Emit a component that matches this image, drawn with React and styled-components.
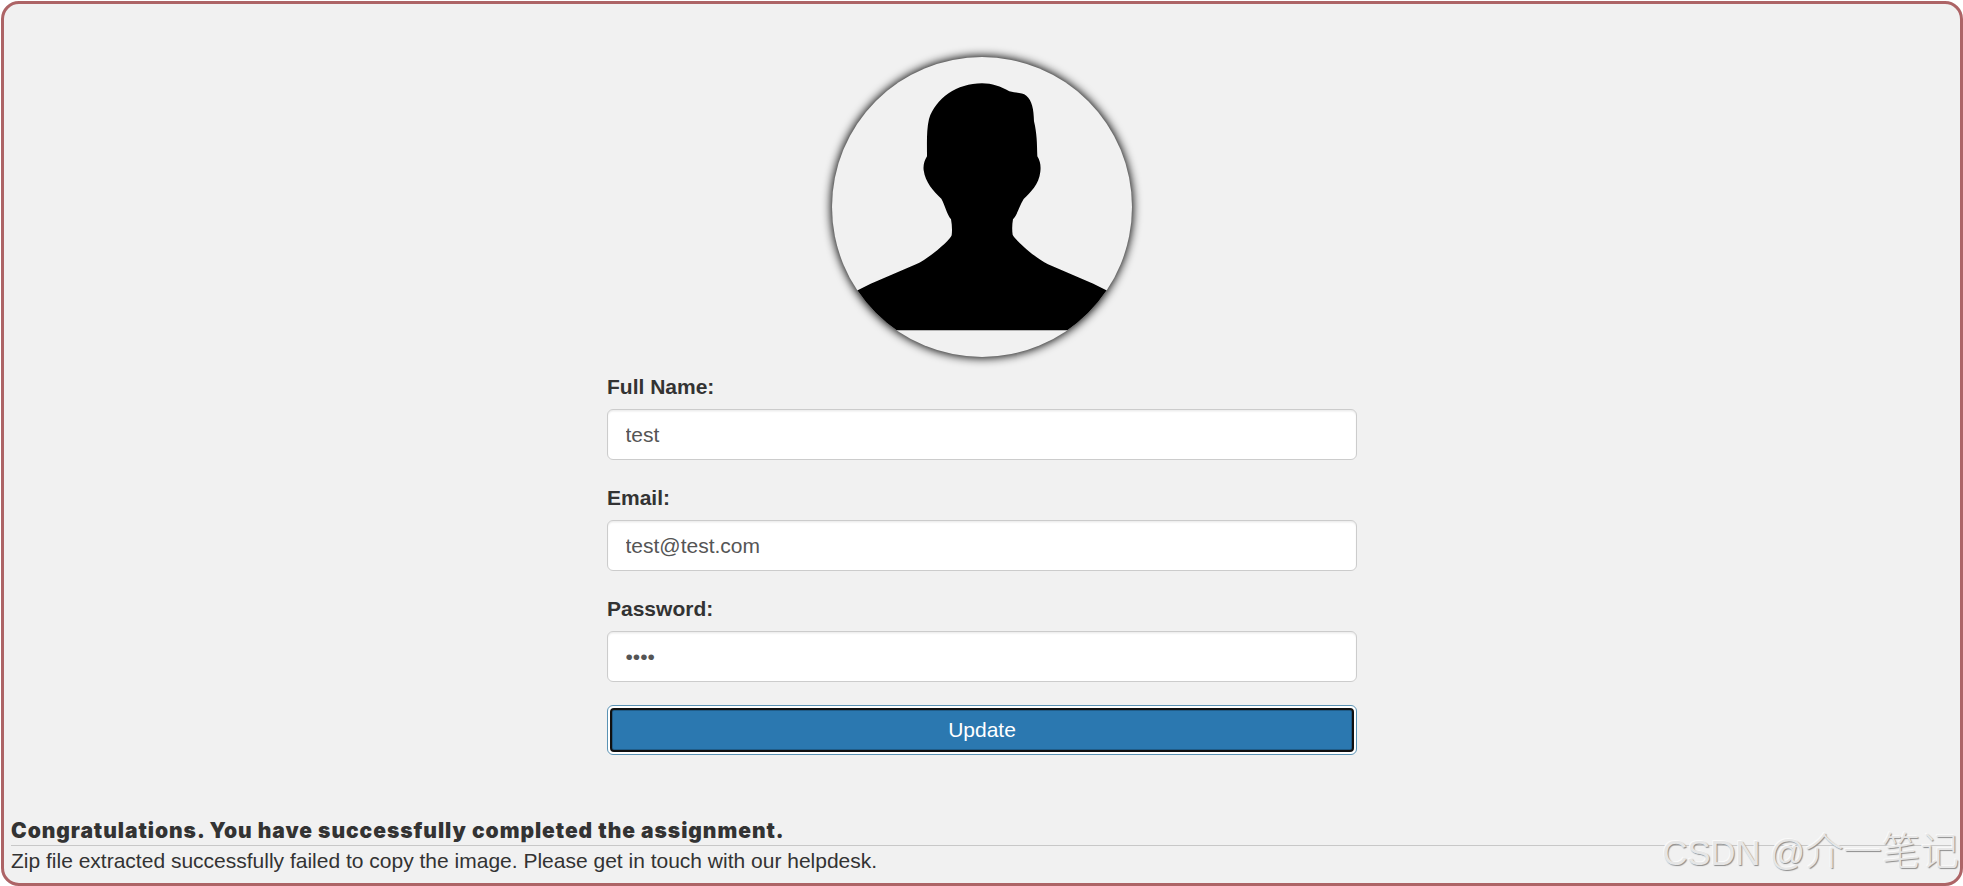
import { useState } from "react";
import styled, { createGlobalStyle } from "styled-components";

const GlobalStyle = createGlobalStyle`
  *, *::before, *::after {
    box-sizing: border-box;
  }
  html, body {
    margin: 0;
    background: #fff;
    overflow: hidden;
  }
  body {
    font-family: "Liberation Sans", Arial, "Noto Sans CJK SC", sans-serif;
    font-size: 21px;
    line-height: 30px;
    color: #333;
  }
`;
const Page = styled.main`
  position: relative;
  display: flex;
  flex-direction: column;
  height: 885px;
  margin: 1px 0 0 1px;
  padding: 53px 7px 0;
  border: 3px solid #ad6466;
  border-radius: 18px;
  background: #f1f1f1;
`;
const Profile = styled.form`
  display: flex;
  flex-direction: column;
  width: 750px;
  margin: 0 auto;
`;
const Avatar = styled.div`
  align-self: center;
  width: 300px;
  height: 300px;
  margin-bottom: 15px;
  border-radius: 50%;
  overflow: hidden;
  box-shadow: 0 0 10px 1px #000;
  svg {
    display: block;
  }
`;
const Group = styled.div`
  display: flex;
  flex-direction: column;
  margin-bottom: 23px;
`;
const Label = styled.label`
  height: 30px;
  margin-bottom: 7px;
  font-weight: 700;
`;
const Input = styled.input`
  height: 51px;
  padding: 9px 17.5px;
  border: 1px solid #ccc;
  border-radius: 6px;
  outline: 0;
  background: #fff;
  box-shadow: inset 0 1.5px 1.5px rgba(0, 0, 0, 0.075);
  color: #555;
  font-family: inherit;
  font-size: 21px;
`;
const Button = styled.button`
  height: 50px;
  padding: 2px;
  border: 1px solid #5a93b5;
  border-radius: 6px;
  background: #fff;
  font-family: inherit;
  font-size: 21px;
  color: #fff;
  span {
    display: flex;
    align-items: center;
    justify-content: center;
    height: 44px;
    border: 2px solid #101010;
    border-radius: 4px;
    background: #2b78b0;
    box-shadow: inset 0 0 0 1px #205c88;
  }
`;
const Result = styled.section`
  margin-top: 60px;
`;
const Title = styled.div`
  height: 31px;
  padding-top: 1px;
  border-bottom: 1px solid #c8c8c8;
  font-family: Inter, "Liberation Sans", sans-serif;
  font-weight: 900;
  letter-spacing: 0.95px;
  white-space: nowrap;
`;
const Message = styled.div`
  white-space: nowrap;
`;
const Watermark = styled.div`
  position: absolute;
  right: 1px;
  bottom: 5px;
  font-family: "Liberation Sans", "Noto Sans CJK SC", sans-serif;
  font-size: 34.5px;
  font-weight: 300;
  line-height: 50px;
  white-space: nowrap;
  color: #e6e6e6;
  text-shadow: 1px 1px 1px #8c8c8c, -1px -1px 0 #fafafa;
  span {
    font-size: 38.5px;
  }
`;

const fields = [
  { name: "fullName", label: "Full Name:", type: "text" },
  { name: "email", label: "Email:", type: "text" },
  { name: "password", label: "Password:", type: "password" },
];

function Silhouette() {
  return (
    <svg width="300" height="300" viewBox="66 50 900 900">
      <path d="M516 129C546 129 572 138 598 153C622 159 638 156 649 166C666 181 671 205 672 243C681 280 681 310 682 348C691 362 693 378 691 394C687 432 661 456 641 476C628 496 624 520 609 537C606 553 606 570 608 583C614 598 674 652 714 672L850 730L889 750L980 800V870H50V800L143 750L182 730L318 672C358 654 421 599 425 585C427 570 426 553 423 537C410 520 405 495 394 475C370 452 346 427 341 390C339 375 343 361 351 348C351 310 349 270 357 236C377 174 441 129 516 129Z" />
    </svg>
  );
}

export default function App() {
  const [user, setUser] = useState({
    fullName: "test",
    email: "test@test.com",
    password: "test",
  });
  const handleChange = (e) => {
    setUser({ ...user, [e.target.name]: e.target.value });
  };
  return (
    <>
      <GlobalStyle />
      <Page>
        <Profile onSubmit={(e) => e.preventDefault()}>
          <Avatar>
            <Silhouette />
          </Avatar>
          {fields.map((field) => (
            <Group key={field.name}>
              <Label htmlFor={field.name}>{field.label}</Label>
              <Input
                id={field.name}
                name={field.name}
                type={field.type}
                value={user[field.name]}
                onChange={handleChange}
              />
            </Group>
          ))}
          <Button type="submit">
            <span>Update</span>
          </Button>
        </Profile>
        <Result>
          <Title>Congratulations. You have successfully completed the assignment.</Title>
          <Message>
            Zip file extracted successfully failed to copy the image. Please get in touch with our
            helpdesk.
          </Message>
        </Result>
        <Watermark>
          CSDN @<span>介一笔记</span>
        </Watermark>
      </Page>
    </>
  );
}
